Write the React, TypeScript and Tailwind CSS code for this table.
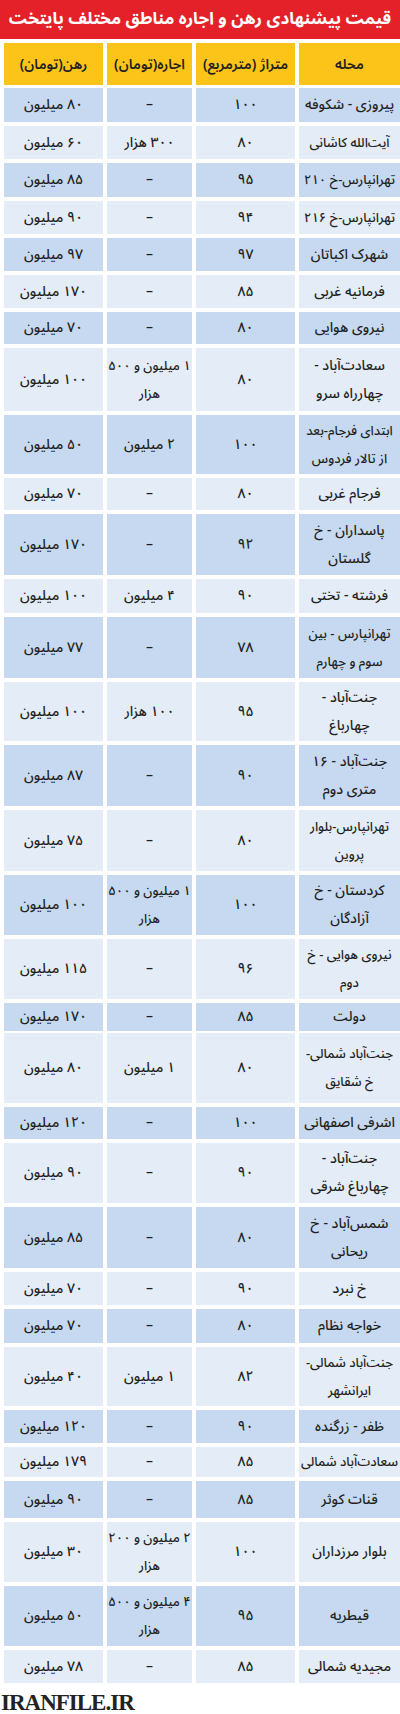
type Row = {
  area: string[]
  size: string
  rent: string[]
  deposit: string
  h: string
}

const rows: Row[] = [
  { area: ['پیروزی - شکوفه'], size: '۱۰۰', rent: ['–'], deposit: '۸۰ میلیون', h: 'h-[34px]' },
  { area: ['آیت‌الله کاشانی'], size: '۸۰', rent: ['۳۰۰ هزار'], deposit: '۶۰ میلیون', h: 'h-[33px]' },
  { area: ['تهرانپارس-خ ۲۱۰'], size: '۹۵', rent: ['–'], deposit: '۸۵ میلیون', h: 'h-[34px]' },
  { area: ['تهرانپارس-خ ۲۱۶'], size: '۹۴', rent: ['–'], deposit: '۹۰ میلیون', h: 'h-[33px]' },
  { area: ['شهرک اکباتان'], size: '۹۷', rent: ['–'], deposit: '۹۷ میلیون', h: 'h-[33px]' },
  { area: ['فرمانیه غربی'], size: '۸۵', rent: ['–'], deposit: '۱۷۰ میلیون', h: 'h-[33px]' },
  { area: ['نیروی هوایی'], size: '۸۰', rent: ['–'], deposit: '۷۰ میلیون', h: 'h-[32px]' },
  { area: ['سعادت‌آباد -', 'چهارراه سرو'], size: '۸۰', rent: ['۱ میلیون و ۵۰۰', 'هزار'], deposit: '۱۰۰ میلیون', h: 'h-[63px]' },
  { area: ['ابتدای فرجام-بعد', 'از تالار فردوس'], size: '۱۰۰', rent: ['۲ میلیون'], deposit: '۵۰ میلیون', h: 'h-[59px]' },
  { area: ['فرجام غربی'], size: '۸۰', rent: ['–'], deposit: '۷۰ میلیون', h: 'h-[32px]' },
  { area: ['پاسداران - خ', 'گلستان'], size: '۹۲', rent: ['–'], deposit: '۱۷۰ میلیون', h: 'h-[61px]' },
  { area: ['فرشته - تختی'], size: '۹۰', rent: ['۴ میلیون'], deposit: '۱۰۰ میلیون', h: 'h-[34px]' },
  { area: ['تهرانپارس - بین', 'سوم و چهارم'], size: '۷۸', rent: ['–'], deposit: '۷۷ میلیون', h: 'h-[61px]' },
  { area: ['جنت‌آباد -', 'چهارباغ'], size: '۹۵', rent: ['۱۰۰ هزار'], deposit: '۱۰۰ میلیون', h: 'h-[59px]' },
  { area: ['جنت‌آباد - ۱۶', 'متری دوم'], size: '۹۰', rent: ['–'], deposit: '۸۷ میلیون', h: 'h-[61px]' },
  { area: ['تهرانپارس-بلوار', 'پروین'], size: '۸۰', rent: ['–'], deposit: '۷۵ میلیون', h: 'h-[61px]' },
  { area: ['کردستان - خ', 'آزادگان'], size: '۱۰۰', rent: ['۱ میلیون و ۵۰۰', 'هزار'], deposit: '۱۰۰ میلیون', h: 'h-[60px]' },
  { area: ['نیروی هوایی - خ', 'دوم'], size: '۹۶', rent: ['–'], deposit: '۱۱۵ میلیون', h: 'h-[60px]' },
  { area: ['دولت'], size: '۸۵', rent: ['–'], deposit: '۱۷۰ میلیون', h: 'h-[26px]' },
  { area: ['جنت‌آباد شمالی-', 'خ شقایق'], size: '۸۰', rent: ['۱ میلیون'], deposit: '۸۰ میلیون', h: 'h-[70px]' },
  { area: ['اشرفی اصفهانی'], size: '۱۰۰', rent: ['–'], deposit: '۱۲۰ میلیون', h: 'h-[32px]' },
  { area: ['جنت‌آباد -', 'چهارباغ شرقی'], size: '۹۰', rent: ['–'], deposit: '۹۰ میلیون', h: 'h-[60px]' },
  { area: ['شمس‌آباد - خ', 'ریحانی'], size: '۸۰', rent: ['–'], deposit: '۸۵ میلیون', h: 'h-[61px]' },
  { area: ['خ نبرد'], size: '۹۰', rent: ['–'], deposit: '۷۰ میلیون', h: 'h-[33px]' },
  { area: ['خواجه نظام'], size: '۸۰', rent: ['–'], deposit: '۷۰ میلیون', h: 'h-[34px]' },
  { area: ['جنت‌آباد شمالی-', 'ایرانشهر'], size: '۸۲', rent: ['۱ میلیون'], deposit: '۴۰ میلیون', h: 'h-[59px]' },
  { area: ['ظفر - زرگنده'], size: '۹۰', rent: ['–'], deposit: '۱۲۰ میلیون', h: 'h-[33px]' },
  { area: ['سعادت‌آباد شمالی'], size: '۸۵', rent: ['–'], deposit: '۱۷۹ میلیون', h: 'h-[30px]' },
  { area: ['قنات کوثر'], size: '۸۵', rent: ['–'], deposit: '۹۰ میلیون', h: 'h-[37px]' },
  { area: ['بلوار مرزداران'], size: '۱۰۰', rent: ['۲ میلیون و ۲۰۰', 'هزار'], deposit: '۳۰ میلیون', h: 'h-[60px]' },
  { area: ['قیطریه'], size: '۹۵', rent: ['۴ میلیون و ۵۰۰', 'هزار'], deposit: '۵۰ میلیون', h: 'h-[60px]' },
  { area: ['مجیدیه شمالی'], size: '۸۵', rent: ['–'], deposit: '۷۸ میلیون', h: 'h-[33px]' },
]

const headers = ['محله', 'متراژ (مترمربع)', 'اجاره(تومان)', 'رهن(تومان)']

const fa = { fontFamily: "'Noto Sans Arabic', 'DejaVu Sans', sans-serif" }

function Cell({ lines, bg, size = 'text-[14px]' }: { lines: string[]; bg: string; size?: string }) {
  return (
    <div className={`flex flex-col items-center justify-center whitespace-nowrap font-medium leading-[28px] text-[#231f20] ${size} ${bg}`}>
      {lines.map((l, i) => (
        <span key={i}>{l}</span>
      ))}
    </div>
  )
}

export default function App() {
  return (
    <div className="w-[400px] bg-white overflow-hidden" dir="rtl" style={fa}>
      {/* Title */}
      <div className="h-[39px] bg-[#e42128] flex items-center justify-center text-white font-bold text-[17px]">
        قیمت پیشنهادی رهن و اجاره مناطق مختلف پایتخت
      </div>

      <div className="pl-[4px]">
        {/* Header */}
        <div className="mt-[4px] grid grid-cols-[101px_99px_85px_99px] gap-x-[4px] h-[42px]">
          {headers.map((h) => (
            <div key={h} className="bg-[#fcc419] flex items-center justify-center text-[14px] font-semibold text-[#231f20] whitespace-nowrap">
              {h}
            </div>
          ))}
        </div>

        {/* Rows */}
        <div className="mt-[3px] flex flex-col gap-[4px]">
          {rows.map((r, i) => {
            const bg = i % 2 === 0 ? 'bg-[#c6d9f0]' : 'bg-[#e3ecf7]'
            return (
              <div key={i} className={`grid grid-cols-[101px_99px_85px_99px] gap-x-[4px] ${r.h}`}>
                <Cell lines={r.area} bg={bg} size={r.area[0].length > 14 ? 'text-[13px]' : 'text-[14px]'} />
                <Cell lines={[r.size]} bg={bg} />
                <Cell lines={r.rent} bg={bg} size={r.rent.length > 1 ? 'text-[13px]' : 'text-[14px]'} />
                <Cell lines={[r.deposit]} bg={bg} />
              </div>
            )
          })}
        </div>
      </div>

      {/* Footer watermark */}
      <div dir="ltr" className="mt-[8px] pl-[1px] text-[23px] leading-[24px] font-bold tracking-[-1px] text-[#222]" style={{ fontFamily: "'Liberation Serif', serif" }}>
        IRANFILE.IR
      </div>
    </div>
  )
}
